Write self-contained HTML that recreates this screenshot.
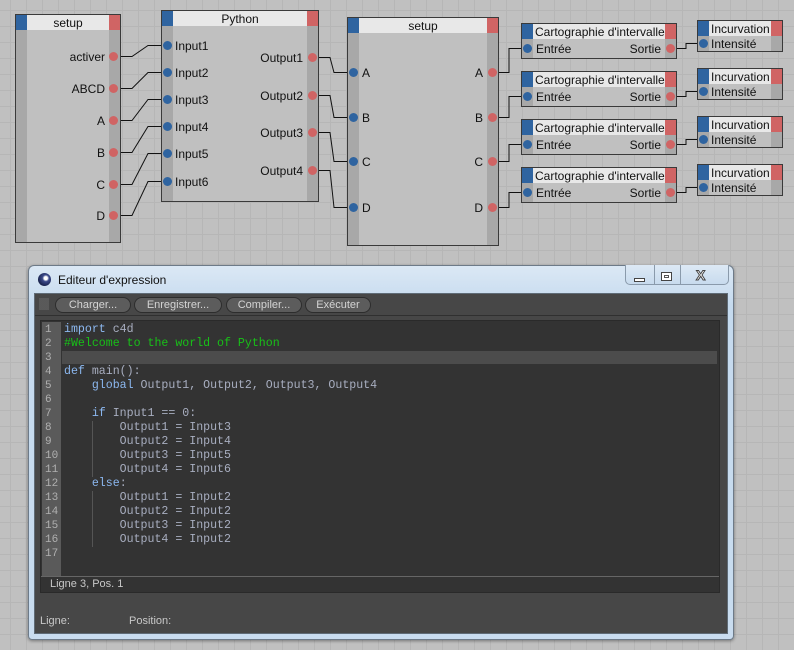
<!DOCTYPE html>
<html><head><meta charset="utf-8"><style>
*{margin:0;padding:0;box-sizing:border-box}
body{width:794px;height:650px;overflow:hidden;position:relative;font-family:"Liberation Sans",sans-serif;font-size:11px;color:#111;
background-color:#c0c0c0;
background-image:linear-gradient(#b6b6b6 1px,transparent 1px),linear-gradient(90deg,#b6b6b6 1px,transparent 1px);
background-size:16px 16px;background-position:10px 10px}
.n{position:absolute;border:1px solid #3a3a3a;background:#c0c0c0}
.h{position:absolute;left:0;right:0;top:0;height:15px;background:#e8e8e8;text-align:center;line-height:16px;font-size:12px}
.lc{position:absolute;left:0;top:0;bottom:0;width:11px;background:#a8a8a8}
.rc{position:absolute;right:0;top:0;bottom:0;width:11px;background:#a8a8a8}
.bl{position:absolute;left:0;top:0;width:11px;height:15px;background:#2f64a0}
.rd{position:absolute;right:0;top:0;width:11px;height:15px;background:#d06464}
.p{position:absolute;width:9px;height:9px;border-radius:50%}
.pi{background:#2f64a0}.po{background:#d06464}
.t{position:absolute;font-size:12px;line-height:12px;white-space:nowrap}
.tr{text-align:right}
#win{position:absolute;left:28px;top:265px;width:706px;height:375px;border:1px solid #6d7a88;border-radius:6px 6px 4px 4px;background:linear-gradient(#dbe8f5,#c5daee 40px,#c9dcef);box-shadow:0 1px 3px rgba(0,0,0,.4)}
#in{position:absolute;left:5px;top:27px;width:694px;height:341px;background:#474747;border:1px solid #5f6b76}
.btn{position:absolute;top:3px;height:16px;border-radius:8px;background:#5c5c5c;border:1px solid #2d2d2d;color:#d4d4d4;font-size:11px;line-height:14px;text-align:center}
#code{position:absolute;left:5px;top:26px;width:680px;height:257px;background:#333;border:1px solid #2a2a2a}
#gut{position:absolute;left:1px;top:1px;width:19px;height:254px;background:#5a5a5a}
.ln{position:absolute;left:0;width:19px;padding-left:3px;font-family:"Liberation Mono",monospace;font-size:11px;color:#b0b0b0;line-height:14px}
.cl{position:absolute;left:23px;font-family:"Liberation Mono",monospace;font-size:11.6px;color:#a8aec0;line-height:14px;white-space:pre}
.k{color:#8cb8f0}.c{color:#18c018}
</style></head><body>
<svg width="794" height="260" style="position:absolute;left:0;top:0" fill="none" stroke="#111" stroke-width="1">
<polyline points="118,56.5 132,56.5 148,45.5 162,45.5"/>
<polyline points="118,88.5 132,88.5 148,72.5 162,72.5"/>
<polyline points="118,120.5 132,120.5 148,99.5 162,99.5"/>
<polyline points="118,152.5 132,152.5 148,126.5 162,126.5"/>
<polyline points="118,184.5 132,184.5 148,153.5 162,153.5"/>
<polyline points="118,215.5 132,215.5 148,181.5 162,181.5"/>
<polyline points="316,57.5 330,57.5 334,72.5 348,72.5"/>
<polyline points="316,95.5 330,95.5 334,117.5 348,117.5"/>
<polyline points="316,132.5 330,132.5 334,161.5 348,161.5"/>
<polyline points="316,170.5 330,170.5 334,207.5 348,207.5"/>
<polyline points="496,72.5 509,72.5 509,48.5 522,48.5"/>
<polyline points="496,117.5 509,117.5 509,96.5 522,96.5"/>
<polyline points="496,161.5 509,161.5 509,144.5 522,144.5"/>
<polyline points="496,207.5 509,207.5 509,192.5 522,192.5"/>
<polyline points="675,48.5 686,48.5 686,43.5 698,43.5"/>
<polyline points="675,96.5 686,96.5 686,91.5 698,91.5"/>
<polyline points="675,144.5 686,144.5 686,139.5 698,139.5"/>
<polyline points="675,192.5 686,192.5 686,187.5 698,187.5"/>
</svg>

<div class="n" style="left:15px;top:14px;width:106px;height:229px">
<div class="lc"></div><div class="rc"></div><div class="h">setup</div><div class="bl"></div><div class="rd"></div>
<div class="t tr" style="right:15px;top:36px">activer</div><div class="p po" style="left:93px;top:37px"></div>
<div class="t tr" style="right:15px;top:68px">ABCD</div><div class="p po" style="left:93px;top:69px"></div>
<div class="t tr" style="right:15px;top:100px">A</div><div class="p po" style="left:93px;top:101px"></div>
<div class="t tr" style="right:15px;top:132px">B</div><div class="p po" style="left:93px;top:133px"></div>
<div class="t tr" style="right:15px;top:164px">C</div><div class="p po" style="left:93px;top:165px"></div>
<div class="t tr" style="right:15px;top:195px">D</div><div class="p po" style="left:93px;top:196px"></div>
</div>

<div class="n" style="left:161px;top:10px;width:158px;height:192px">
<div class="lc"></div><div class="rc"></div><div class="h">Python</div><div class="bl"></div><div class="rd"></div>
<div class="p pi" style="left:1px;top:30px"></div><div class="t" style="left:13px;top:29px">Input1</div>
<div class="p pi" style="left:1px;top:57px"></div><div class="t" style="left:13px;top:56px">Input2</div>
<div class="p pi" style="left:1px;top:84px"></div><div class="t" style="left:13px;top:83px">Input3</div>
<div class="p pi" style="left:1px;top:111px"></div><div class="t" style="left:13px;top:110px">Input4</div>
<div class="p pi" style="left:1px;top:138px"></div><div class="t" style="left:13px;top:137px">Input5</div>
<div class="p pi" style="left:1px;top:166px"></div><div class="t" style="left:13px;top:165px">Input6</div>
<div class="t tr" style="right:15px;top:41px">Output1</div><div class="p po" style="left:146px;top:42px"></div>
<div class="t tr" style="right:15px;top:79px">Output2</div><div class="p po" style="left:146px;top:80px"></div>
<div class="t tr" style="right:15px;top:116px">Output3</div><div class="p po" style="left:146px;top:117px"></div>
<div class="t tr" style="right:15px;top:154px">Output4</div><div class="p po" style="left:146px;top:155px"></div>
</div>

<div class="n" style="left:347px;top:17px;width:152px;height:229px">
<div class="lc"></div><div class="rc"></div><div class="h">setup</div><div class="bl"></div><div class="rd"></div>
<div class="p pi" style="left:1px;top:50px"></div><div class="t" style="left:14px;top:49px">A</div>
<div class="p pi" style="left:1px;top:95px"></div><div class="t" style="left:14px;top:94px">B</div>
<div class="p pi" style="left:1px;top:139px"></div><div class="t" style="left:14px;top:138px">C</div>
<div class="p pi" style="left:1px;top:185px"></div><div class="t" style="left:14px;top:184px">D</div>
<div class="t tr" style="right:15px;top:49px">A</div><div class="p po" style="left:140px;top:50px"></div>
<div class="t tr" style="right:15px;top:94px">B</div><div class="p po" style="left:140px;top:95px"></div>
<div class="t tr" style="right:15px;top:138px">C</div><div class="p po" style="left:140px;top:139px"></div>
<div class="t tr" style="right:15px;top:184px">D</div><div class="p po" style="left:140px;top:185px"></div>
</div>

<div class="n" style="left:521px;top:23px;width:156px;height:36px"><div class="lc"></div><div class="rc"></div><div class="h" style="text-align:left;padding-left:13px">Cartographie d'intervalle</div><div class="bl"></div><div class="rd"></div><div class="p pi" style="left:1px;top:20px"></div><div class="t" style="left:14px;top:19px">Entrée</div><div class="t tr" style="right:15px;top:19px">Sortie</div><div class="p po" style="left:144px;top:20px"></div></div>
<div class="n" style="left:521px;top:71px;width:156px;height:36px"><div class="lc"></div><div class="rc"></div><div class="h" style="text-align:left;padding-left:13px">Cartographie d'intervalle</div><div class="bl"></div><div class="rd"></div><div class="p pi" style="left:1px;top:20px"></div><div class="t" style="left:14px;top:19px">Entrée</div><div class="t tr" style="right:15px;top:19px">Sortie</div><div class="p po" style="left:144px;top:20px"></div></div>
<div class="n" style="left:521px;top:119px;width:156px;height:36px"><div class="lc"></div><div class="rc"></div><div class="h" style="text-align:left;padding-left:13px">Cartographie d'intervalle</div><div class="bl"></div><div class="rd"></div><div class="p pi" style="left:1px;top:20px"></div><div class="t" style="left:14px;top:19px">Entrée</div><div class="t tr" style="right:15px;top:19px">Sortie</div><div class="p po" style="left:144px;top:20px"></div></div>
<div class="n" style="left:521px;top:167px;width:156px;height:36px"><div class="lc"></div><div class="rc"></div><div class="h" style="text-align:left;padding-left:13px">Cartographie d'intervalle</div><div class="bl"></div><div class="rd"></div><div class="p pi" style="left:1px;top:20px"></div><div class="t" style="left:14px;top:19px">Entrée</div><div class="t tr" style="right:15px;top:19px">Sortie</div><div class="p po" style="left:144px;top:20px"></div></div>

<div class="n" style="left:697px;top:20px;width:86px;height:32px"><div class="lc"></div><div class="rc"></div><div class="h" style="text-align:left;padding-left:13px">Incurvation</div><div class="bl"></div><div class="rd"></div><div class="p pi" style="left:1px;top:18px"></div><div class="t" style="left:13px;top:17px">Intensité</div></div>
<div class="n" style="left:697px;top:68px;width:86px;height:32px"><div class="lc"></div><div class="rc"></div><div class="h" style="text-align:left;padding-left:13px">Incurvation</div><div class="bl"></div><div class="rd"></div><div class="p pi" style="left:1px;top:18px"></div><div class="t" style="left:13px;top:17px">Intensité</div></div>
<div class="n" style="left:697px;top:116px;width:86px;height:32px"><div class="lc"></div><div class="rc"></div><div class="h" style="text-align:left;padding-left:13px">Incurvation</div><div class="bl"></div><div class="rd"></div><div class="p pi" style="left:1px;top:18px"></div><div class="t" style="left:13px;top:17px">Intensité</div></div>
<div class="n" style="left:697px;top:164px;width:86px;height:32px"><div class="lc"></div><div class="rc"></div><div class="h" style="text-align:left;padding-left:13px">Incurvation</div><div class="bl"></div><div class="rd"></div><div class="p pi" style="left:1px;top:18px"></div><div class="t" style="left:13px;top:17px">Intensité</div></div>

<div id="win">
<div style="position:absolute;left:9px;top:7px;width:13px;height:13px;border-radius:50%;background:radial-gradient(circle at 60% 40%,#fff 0 15%,#3c4a8a 30%,#111a40 80%)"></div>
<div style="position:absolute;left:29px;top:7px;font-size:12px;color:#111">Editeur d'expression</div>
<div style="position:absolute;left:596px;top:-1px;width:104px;height:20px;border:1px solid #8a9aab;border-top:none;border-radius:0 0 5px 5px;background:linear-gradient(#dde9f5,#c8dbee)"></div>
<div style="position:absolute;left:625px;top:-1px;width:1px;height:20px;background:#8a9aab"></div>
<div style="position:absolute;left:651px;top:-1px;width:1px;height:20px;background:#8a9aab"></div>
<div style="position:absolute;left:605px;top:12px;width:11px;height:4px;border:1px solid #444;background:#fff"></div>
<div style="position:absolute;left:632px;top:6px;width:11px;height:9px;border:1px solid #444;background:#fff;box-shadow:inset 0 0 0 2px #fff,inset 0 0 0 3px #555"></div>
<div style="position:absolute;left:667px;top:1px;font-size:14px;font-weight:bold;color:#fff;-webkit-text-stroke:1px #444">X</div>
<div id="in">
<div style="position:absolute;left:4px;top:4px;width:10px;height:12px;background-image:radial-gradient(#8a8a8a 0.6px,transparent 0.8px);background-size:2px 2px"></div>
<div class="btn" style="left:20px;width:76px">Charger...</div>
<div class="btn" style="left:99px;width:88px">Enregistrer...</div>
<div class="btn" style="left:191px;width:76px">Compiler...</div>
<div class="btn" style="left:270px;width:66px">Exécuter</div>
<div style="position:absolute;left:0;right:0;top:21px;height:1px;background:#303030"></div>
<div id="code">
<div style="position:absolute;left:21px;right:2px;top:30px;height:13px;background:#4c4c4c"></div>
<div id="gut">
<div class="ln" style="top:1px">1<br>2<br>3<br>4<br>5<br>6<br>7<br>8<br>9<br>10<br>11<br>12<br>13<br>14<br>15<br>16<br>17</div>
</div>
<div style="position:absolute;left:51px;top:100px;width:1px;height:56px;background:#555"></div>
<div style="position:absolute;left:51px;top:170px;width:1px;height:56px;background:#555"></div>
<div class="cl" style="top:2px"><span class="k">import</span> c4d
<span class="c">#Welcome to the world of Python</span>

<span class="k">def</span> main():
    <span class="k">global</span> Output1, Output2, Output3, Output4

    <span class="k">if</span> Input1 == 0:
        Output1 = Input3
        Output2 = Input4
        Output3 = Input5
        Output4 = Input6
    <span class="k">else</span>:
        Output1 = Input2
        Output2 = Input2
        Output3 = Input2
        Output4 = Input2
</div>
<div style="position:absolute;left:0;right:0;top:255px;height:1px;background:#666"></div>
</div>
<div style="position:absolute;left:5px;top:283px;width:680px;height:16px;background:#333;border:1px solid #2a2a2a;border-top:none;color:#c8c8c8;font-size:11px;padding-left:9px;line-height:14px">Ligne 3, Pos. 1</div>
<div style="position:absolute;left:5px;top:321px;color:#c8c8c8;font-size:11px">Ligne:</div>
<div style="position:absolute;left:94px;top:321px;color:#c8c8c8;font-size:11px">Position:</div>
</div>
</div>
</body></html>
